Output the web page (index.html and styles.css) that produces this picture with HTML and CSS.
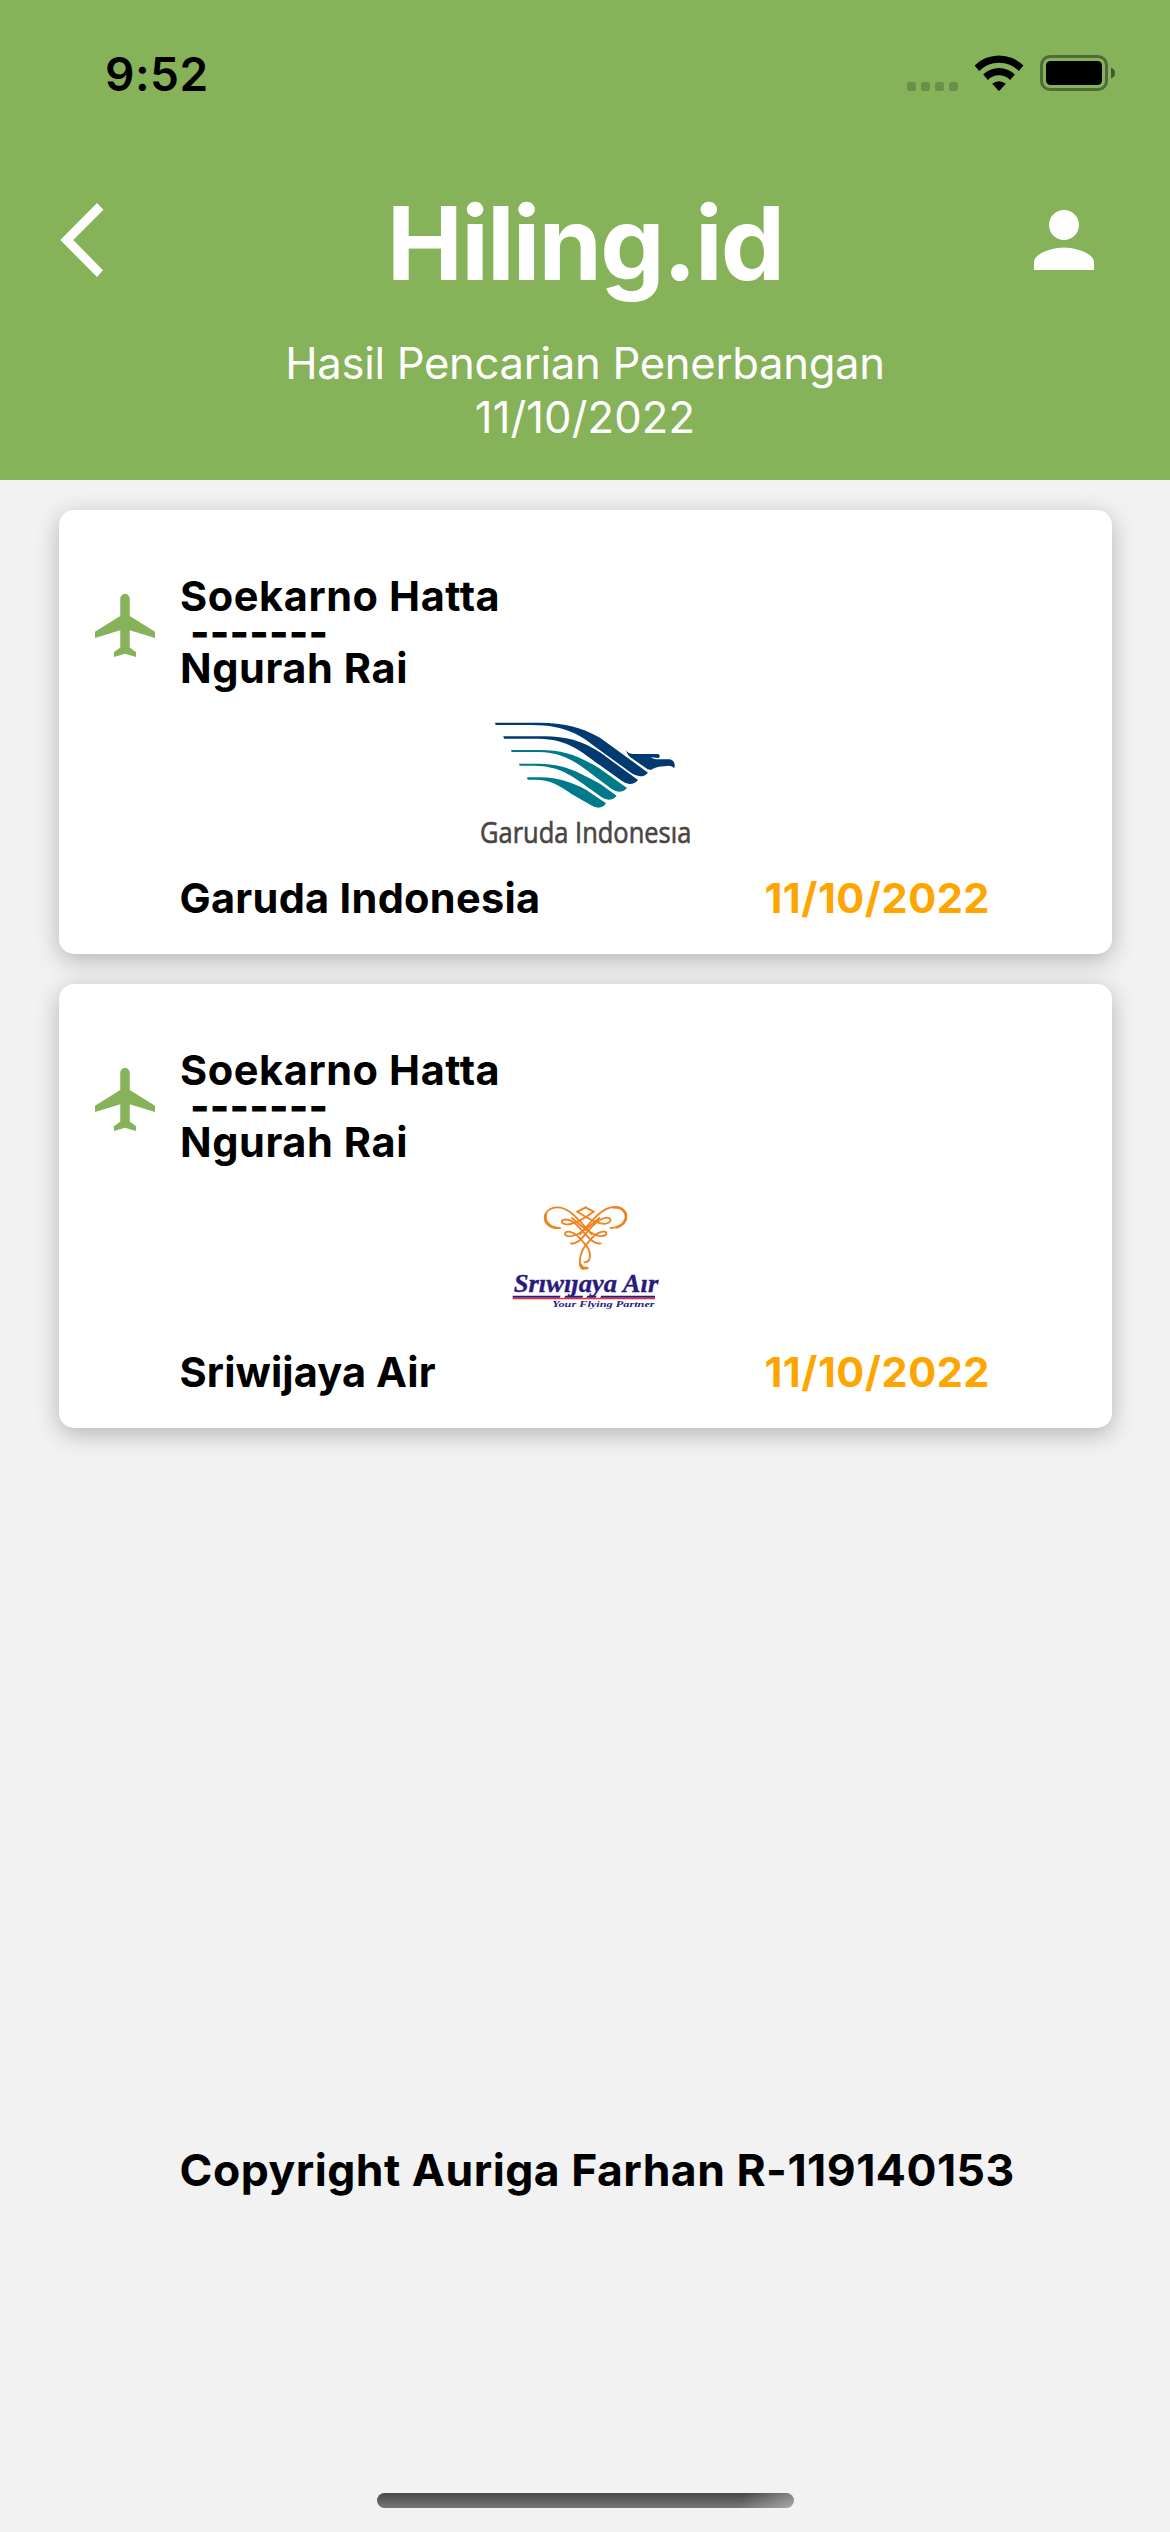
FILE: index.html
```html
<!DOCTYPE html>
<html lang="id">
<head>
<meta charset="utf-8">
<title>Hiling.id</title>
<link rel="stylesheet" href="styles.css">
</head>
<body>
<div class="screen">
  <header class="header">
    <div class="status">
      <span class="clock">9:52</span>
      <svg class="status-icons" width="210" height="40" viewBox="0 0 210 40">
        <g fill="#000" fill-opacity=".2">
          <rect x="0" y="28" width="9" height="9" rx="2.5"/>
          <rect x="14" y="28" width="9" height="9" rx="2.5"/>
          <rect x="28" y="28" width="9" height="9" rx="2.5"/>
          <rect x="42" y="28" width="9" height="9" rx="2.5"/>
        </g>
        <path d="M67.6 11.6a34.5 34.5 0 0 1 48.8 0l-4.6 5.3a28 28 0 0 0-39.6 0z"/>
        <path d="M76.2 20.6a22.5 22.5 0 0 1 31.6 0l-4.7 5.3a15.8 15.8 0 0 0-22.2 0z"/>
        <path d="M85.2 29.8a10.5 10.5 0 0 1 13.6 0L92.7 36.6q-.7.7-1.4 0z"/>
        <rect x="134.5" y="2.5" width="65" height="33" rx="8.5" fill="none" stroke="#000" stroke-opacity=".4" stroke-width="3"/>
        <rect x="139" y="7" width="56" height="24" rx="4.5"/>
        <path d="M204 13.5q4 1.5 4 5.500t-4 5.500z" fill-opacity=".5"/>
      </svg>
    </div>
    <div class="bar">
      <svg class="back" width="44" height="74" viewBox="0 0 44 74"><path d="M37 0l6.500 6.700L13.300 37 43 67.300 37 74 .3 37z" fill="#fff"/></svg>
      <h1 class="title">Hiling.id</h1>
      <svg class="user" width="60" height="60" viewBox="4 4 16 16"><path fill="#fff" d="M12 12c2.210 0 4-1.790 4-4s-1.790-4-4-4-4 1.790-4 4 1.790 4 4 4zm0 2c-2.670 0-8 1.340-8 4v2h16v-2c0-2.660-5.330-4-8-4z"/></svg>
    </div>
    <div class="subtitle">
      <p class="subtitle-text">Hasil Pencarian Penerbangan</p>
      <p class="subtitle-date">11/10/2022</p>
    </div>
  </header>

  <main class="list">
    <article class="card">
      <div class="route">
        <svg class="plane" width="60" height="63" viewBox="2 2 19 20" preserveAspectRatio="none"><path fill="#86b25a" d="M21 16v-2l-8-5V3.500c0-.83-.67-1.500-1.500-1.500S10 2.670 10 3.500V9l-8 5v2l8-2.500V19l-2 1.500V22l3.500-1 3.500 1v-1.500L13 19v-5.500l8 2.500z"/></svg>
        <div class="airports">
          <p class="airport">Soekarno Hatta</p>
          <p class="dashes">-------</p>
          <p class="airport">Ngurah Rai</p>
        </div>
      </div>
      <svg class="logo" width="250" height="160" viewBox="0 0 750 480">
        <g fill="#003a70">
          <path d="M105 68H240C310 69 362 80 420 113L564 218Q556 229 540 229Q527 228 514 219L420 151C365 108 320 75 215 75H107z"/>
          <path d="M130 109H255C315 110 365 121 420 157L534 240Q525 252 509 252Q497 251 486 243L420 196C365 156 325 117 235 116H132z"/>
          <path d="M498 149C502 159 510 162 529 162H594Q600 163 599 171L596 174L572 172Q578 177 588 178L630 178Q648 184 643 205Q637 198 627 197L596 200Q580 204 572 210L562 207L520 178Q500 166 498 149z"/>
        </g>
        <g fill="#007a8a">
          <path d="M153 150H240C310 151 350 164 420 206L501 264Q493 275 477 275Q465 274 454 266L420 241C360 196 320 157 235 156H155z"/>
          <path d="M177 191H240C310 193 345 210 420 251L470 287Q461 299 445 299Q433 298 424 291L395 270C335 226 300 198 220 197H179z"/>
          <path d="M201 232H240C300 233 335 248 378 269L438 310Q430 323 415 323Q402 322 392 315L336 283C300 257 270 239 225 239H203z"/>
        </g>
        <text class="garuda-name" x="60" y="428" textLength="634" lengthAdjust="spacingAndGlyphs">Garuda Indonesıa</text>
      </svg>
      <div class="details"><span class="airline">Garuda Indonesia</span><span class="date">11/10/2022</span></div>
    </article>

    <article class="card">
      <div class="route">
        <svg class="plane" width="60" height="63" viewBox="2 2 19 20" preserveAspectRatio="none"><path fill="#86b25a" d="M21 16v-2l-8-5V3.500c0-.83-.67-1.500-1.500-1.500S10 2.670 10 3.500V9l-8 5v2l8-2.500V19l-2 1.500V22l3.500-1 3.500 1v-1.500L13 19v-5.500l8 2.500z"/></svg>
        <div class="airports">
          <p class="airport">Soekarno Hatta</p>
          <p class="dashes">-------</p>
          <p class="airport">Ngurah Rai</p>
        </div>
      </div>
      <svg class="logo" width="250" height="160" viewBox="-90 -48 750 480">
        <g fill="none" stroke="#ee8322" stroke-width="5.500" stroke-linecap="round">
          <path d="M287 52L311 65C290 80 252 103 230 103C212 102 210 88 228 88C252 90 270 115 287 134Q312 164 332 160"/>
          <path d="M287 52L262 65C285 80 325 103 347 101C366 98 366 83 350 83C325 85 300 115 285 134Q262 164 243 160"/>
          <path d="M328 84C300 108 262 142 236 139C220 137 222 124 238 125C258 128 272 147 288 166C306 188 303 218 283 217"/>
          <path d="M246 84C274 108 312 142 338 138C354 135 352 123 338 125C316 128 304 146 287 166C268 188 263 234 280 237"/>
          <path d="M210 114C172 118 157 90 168 70C182 46 215 48 240 66C262 82 280 106 305 133"/>
          <path d="M362 114C402 112 412 90 407 72C396 45 360 46 334 66C312 82 294 106 270 133"/>
        </g>
        <g fill="none" stroke="#ee8322" stroke-width="8" stroke-linecap="round">
          <path d="M202 114C178 112 163 95 167 74"/>
          <path d="M372 52C400 50 413 72 406 89Q399 106 380 112"/>
          <path d="M272 224Q276 237 292 234"/>
        </g>
        <path d="M68 317H212l-3 6H68zM226 317h54l-3 6h-54zM292 317h28l-3 6h-28zM334 317H495v6H330z" fill="#2a1a7c"/>
        <path d="M68 323H495v4.500H68z" fill="#ea2e3a"/>
        <text class="sriwijaya-name" x="71" y="305" textLength="434" lengthAdjust="spacingAndGlyphs">Srıwıȷaya Aır</text>
        <text class="sriwijaya-tag" x="187" y="350" textLength="307" lengthAdjust="spacingAndGlyphs">Your Flying Partner</text>
      </svg>
      <div class="details"><span class="airline airline-tight">Sriwijaya Air</span><span class="date">11/10/2022</span></div>
    </article>
  </main>

  <footer class="footer">Copyright Auriga Farhan R-119140153</footer>
  <div class="home-indicator"></div>
</div>
</body>
</html>
```
FILE: styles.css
```css
* { box-sizing: border-box; margin: 0; padding: 0; }
body { background: #f2f2f2; font-family: Inter, "Liberation Sans", sans-serif; }
svg { display: block; flex: none; }
.screen { width: 1170px; height: 2532px; display: flex; flex-direction: column; }

.header { height: 480px; background: #86b25a; color: #fff; padding-top: 47px; flex: none; }
.status { display: flex; justify-content: space-between; align-items: center; height: 54px; padding: 0 53px 0 105px; color: #000; }
.clock { font-size: 46px; font-weight: 600; line-height: 54px; letter-spacing: .5px; }
.bar { display: flex; justify-content: space-between; align-items: center; height: 120px; margin-top: 82px; padding: 0 76px 0 60px; }
.back { margin-bottom: 6px; }
.user { margin-bottom: 6px; }
.title { font-size: 102px; font-weight: 700; line-height: 120px; letter-spacing: -1.85px; margin-left: 32px; }
.subtitle { margin-top: 34px; text-align: center; font-size: 43.6px; line-height: 54px; }
.subtitle-text { letter-spacing: -.3px; }
.subtitle-date { letter-spacing: .09px; }

.list { display: flex; flex-direction: column; align-items: center; gap: 30px; padding-top: 30px; }
.card { width: 1053px; height: 444px; background: #fff; border-radius: 15px; box-shadow: 0 6px 23px rgba(0, 0, 0, .26); display: flex; flex-direction: column; padding-top: 61px; font-size: 41.5px; font-weight: 700; line-height: 50px; }
.route { display: flex; padding-left: 36.5px; gap: 25px; }
.plane { margin-top: 23px; }
.airport { letter-spacing: .58px; }
.dashes { line-height: 22px; padding-left: 10px; font-weight: 800; letter-spacing: .2px; }
.logo { align-self: center; margin-top: 7px; }
.details { display: flex; justify-content: space-between; margin-top: 13px; padding: 0 121.5px 0 121px; }
.airline { letter-spacing: .29px; }
.airline-tight { letter-spacing: .13px; }
.date { color: #ffa500; letter-spacing: .53px; }

.garuda-name { font-family: "Open Sans", "Noto Sans", sans-serif; font-size: 90px; font-weight: 500; fill: #4a4543; stroke: #4a4543; stroke-width: 2px; }
.sriwijaya-name { font-family: "Liberation Serif", serif; font-size: 73px; font-weight: 700; font-style: italic; fill: #2a1a7c; stroke: #2a1a7c; stroke-width: 1px; }
.sriwijaya-tag { font-family: "Liberation Serif", serif; font-size: 25px; font-weight: 700; font-style: italic; fill: #2a1a7c; }

.footer { margin-top: 715px; padding-left: 179.5px; font-size: 44.5px; font-weight: 700; line-height: 54px; letter-spacing: .49px; white-space: nowrap; }
.home-indicator { width: 417px; height: 15px; margin: auto auto 24px; border-radius: 7.5px; background: linear-gradient(115deg, rgba(242, 242, 242, 0) 87%, rgba(242, 242, 242, .4) 100%), linear-gradient(#484848, #777); }
```
